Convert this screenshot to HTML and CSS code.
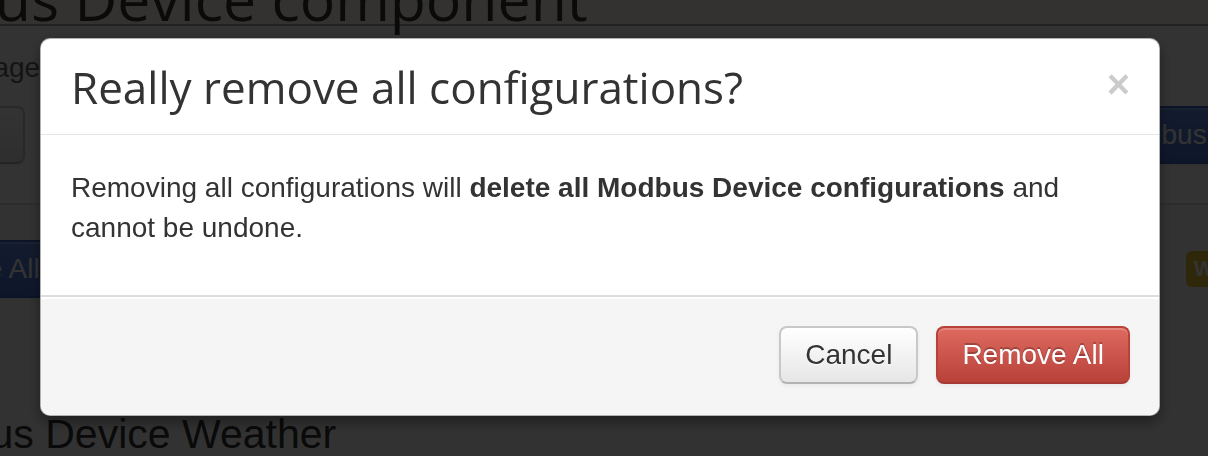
FILE: index.html
```html
<!DOCTYPE html>
<html lang="en">
<head>
<meta charset="utf-8">
<title>Modbus Device component</title>
<link rel="stylesheet" href="styles.css">
</head>
<body>
<div class="page">
  <div class="page-header">
    <h1 class="page-title">Modbus Device component</h1>
  </div>
  <p class="lead">Manage the Modbus devices of this component.</p>
  <div class="toolbar">
    <button class="btn">Scan</button>
    <button class="btn btn-primary">Modbus Device</button>
  </div>
  <div class="list">
    <div class="list-row">
      <button class="btn btn-primary">Remove All</button>
      <span class="label label-warning">Warning</span>
    </div>
    <h2 class="section-title">Modbus Device Weather</h2>
  </div>
</div>

<div class="backdrop"></div>

<div class="modal" role="dialog" aria-labelledby="modal-title">
  <div class="modal-header">
    <button class="close" aria-label="Close">&times;</button>
    <h3 class="modal-title" id="modal-title">Really remove all configurations?</h3>
  </div>
  <div class="modal-body">
    <p>Removing all configurations will <strong>delete all Modbus Device configurations</strong> and cannot be undone.</p>
  </div>
  <div class="modal-footer">
    <button class="btn">Cancel</button>
    <button class="btn btn-danger">Remove All</button>
  </div>
</div>
</body>
</html>
```

FILE: styles.css
```css
* {
  box-sizing: border-box;
}

html,
body {
  margin: 0;
  padding: 0;
}

body {
  width: 1208px;
  height: 456px;
  overflow: hidden;
  background: #fff;
  color: #333;
  font-family: "Liberation Sans", Arial, Helvetica, sans-serif;
  font-size: 28px;
  line-height: 40px;
}

/* ---------- page behind the dialog ---------- */
.page {
  width: 1560px;
  margin-left: -160px;
}

.page-header {
  display: flow-root;
  height: 26px;
  background: #fffaf0;
  border-bottom: 2px solid #aaa;
}

.page-title {
  margin: -31px 0 0 -6px;
  font-family: "Open Sans", sans-serif;
  font-weight: 400;
  font-size: 59px;
  line-height: 59px;
  color: #333;
  white-space: nowrap;
}

.lead {
  margin: 22px 0 0;
  padding-left: 99px;
  color: #666;
  white-space: nowrap;
}

.toolbar {
  display: flex;
  justify-content: space-between;
  align-items: center;
  width: 1486px;
  margin-top: 18px;
  padding: 0 0 39px 69px;
  border-bottom: 2px solid #ddd;
}

.list {
  background: #f9f9f9;
}

.list-row {
  display: flex;
  align-items: center;
  justify-content: space-between;
  width: 1449px;
  padding: 35px 0 0 32px;
}

.section-title {
  margin: 0;
  padding: 112px 0 0 48px;
  font-size: 41px;
  line-height: 48px;
  font-weight: 400;
  color: #333;
  white-space: nowrap;
}

.btn {
  display: inline-block;
  font-family: "Liberation Sans", Arial, sans-serif;
  font-size: 28px;
  line-height: 40px;
  padding: 7px 24px;
  border: 2px solid #c8c8c8;
  border-bottom-color: #b3b3b3;
  border-radius: 8px;
  color: #333;
  background: linear-gradient(#fff, #e6e6e6);
  text-shadow: 0 1px 1px rgba(255, 255, 255, 0.75);
  box-shadow: inset 0 2px 0 rgba(255, 255, 255, 0.2), 0 2px 4px rgba(0, 0, 0, 0.05);
  cursor: pointer;
}

.btn-primary {
  color: #fff;
  text-shadow: none;
  border-color: #3d63c0;
  background: linear-gradient(#5f8be6, #476fd0);
}

.label {
  display: inline-block;
  font-size: 22px;
  font-weight: 700;
  line-height: 28px;
  padding: 4px 8px;
  border-radius: 6px;
  color: #fff;
  background: #e8c232;
}

/* ---------- backdrop ---------- */
.backdrop {
  position: fixed;
  inset: 0;
  background: rgba(0, 0, 0, 0.8);
}

/* ---------- dialog ---------- */
.modal {
  position: fixed;
  top: 38px;
  left: 40px;
  width: 1120px;
  background: #fff;
  border: 1px solid rgba(0, 0, 0, 0.3);
  border-radius: 10px;
  overflow: hidden;
  box-shadow: 0 6px 14px rgba(0, 0, 0, 0.4);
}

.modal-header {
  padding: 18px 29px 18px 30px;
  height: 96px;
  border-bottom: 1px solid #e5e5e5;
}

.modal-title {
  margin: 0;
  font-family: "Open Sans", sans-serif;
  font-weight: 400;
  font-size: 44px;
  line-height: 60px;
  color: #333;
}

.close {
  float: right;
  margin-top: 7px;
  padding: 0;
  border: 0;
  background: none;
  font-family: "Liberation Sans", Arial, sans-serif;
  font-size: 40px;
  font-weight: 700;
  line-height: 40px;
  color: #000;
  opacity: 0.2;
  cursor: pointer;
}

.modal-body {
  padding: 33px 30px 27px;
}

.modal-body p {
  margin: 0 0 20px;
}

.modal-footer {
  display: flex;
  justify-content: flex-end;
  gap: 18px;
  padding: 29px 29px 31px 30px;
  background: #f5f5f5;
  border-top: 2px solid #ddd;
  box-shadow: inset 0 2px 0 #fff;
}

.btn-danger {
  color: #fff;
  border-color: #b8413a;
  border-bottom-color: #a33a33;
  background: linear-gradient(#de6a5f, #b8413a);
  text-shadow: 0 -2px 0 rgba(0, 0, 0, 0.25);
}
```
